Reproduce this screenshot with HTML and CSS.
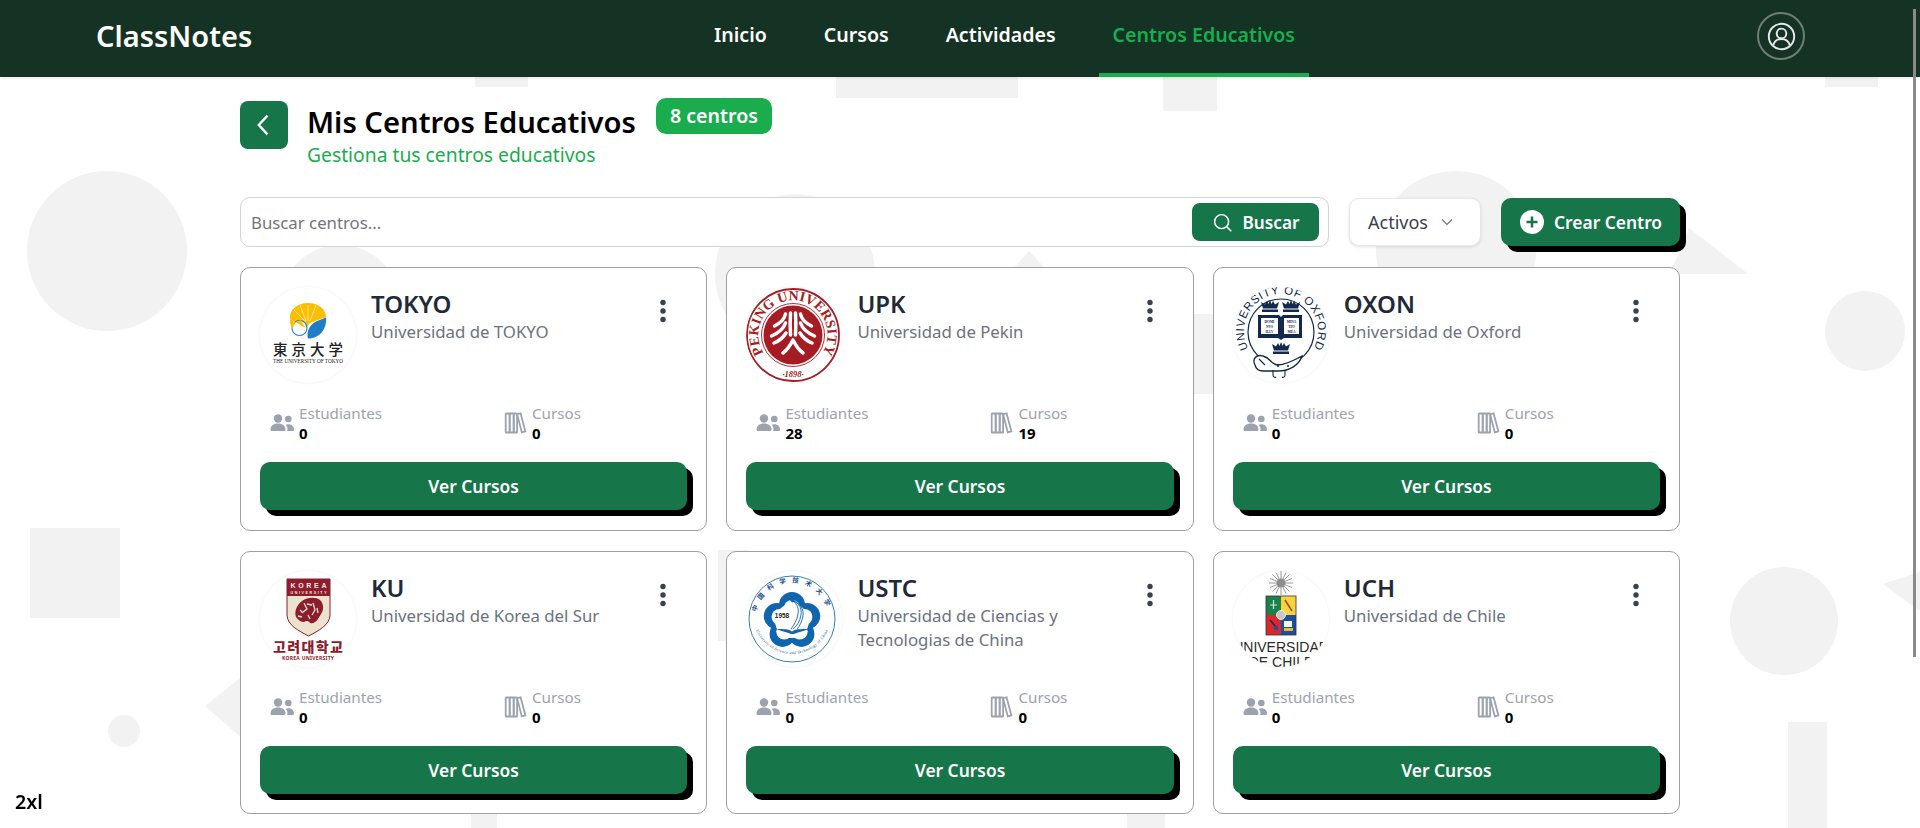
FILE: index.html
```html
<!DOCTYPE html>
<html lang="es">
<head>
<meta charset="utf-8">
<title>ClassNotes</title>
<link rel="stylesheet" href="styles.css">
</head>
<body>
<svg class="bg-shapes" viewBox="0 0 1920 828" aria-hidden="true">
  <rect x="475" y="60" width="53" height="27"/>
  <rect x="836" y="60" width="182" height="38"/>
  <rect x="1163" y="60" width="54" height="51"/>
  <rect x="1825" y="60" width="53" height="27"/>
  <circle cx="107" cy="251" r="80"/>
  <circle cx="795" cy="274" r="80"/>
  <circle cx="1456" cy="251" r="80"/>
  <circle cx="1865" cy="331" r="40"/>
  <circle cx="1784" cy="621" r="54"/>
  <circle cx="124" cy="731" r="16"/>
  <circle cx="340" cy="305" r="60"/>
  <rect x="30" y="528" width="90" height="90"/>
  <rect x="1788" y="722" width="39" height="106"/>
  <rect x="471" y="780" width="26" height="48"/>
  <rect x="718" y="550" width="30" height="91"/>
  <rect x="1180" y="314" width="40" height="80"/>
  <rect x="1127" y="790" width="38" height="38"/>
  <polygon points="1029,251 1075,300 985,300"/>
  <polygon points="1689,228 1748,274 1670,274"/>
  <polygon points="205,706 250,670 250,745"/>
  <polygon points="1883,584 1925,570 1925,615"/>
</svg>

<header class="topbar">
  <div class="brand">ClassNotes</div>
  <nav class="nav">
    <a class="nav-link">Inicio</a>
    <a class="nav-link">Cursos</a>
    <a class="nav-link">Actividades</a>
    <a class="nav-link active">Centros Educativos</a>
  </nav>
  <button class="avatar" aria-label="Perfil">
    <svg viewBox="0 0 24 24" class="avatar-icon"><circle cx="12" cy="12" r="10.5"/><circle cx="12" cy="9.5" r="4"/><path d="M5 19.5c1-3.6 3.8-5.5 7-5.5s6 1.900 7 5.500"/></svg>
  </button>
</header>

<main class="page">
  <section class="page-head">
    <button class="back" aria-label="Volver">
      <svg viewBox="0 0 24 24" class="back-icon"><path d="M15 4 7.500 12 15 20"/></svg>
    </button>
    <div class="head-text">
      <div class="title-row">
        <h1 class="title">Mis Centros Educativos</h1>
        <span class="count">8 centros</span>
      </div>
      <p class="subtitle">Gestiona tus centros educativos</p>
    </div>
  </section>

  <section class="toolbar">
    <div class="search">
      <input class="search-input" placeholder="Buscar centros...">
      <button class="search-btn">
        <svg viewBox="0 0 24 24" class="search-icon"><circle cx="11" cy="11" r="8"/><path d="m17 17 5 5"/></svg>
        Buscar
      </button>
    </div>
    <button class="filter">Activos
      <svg viewBox="0 0 12 8" class="filter-icon"><path d="M1 1.500 6 6.500l5-5"/></svg>
    </button>
    <button class="create">
      <svg viewBox="0 0 24 24" class="create-icon"><circle cx="12" cy="12" r="12" fill="#fff" stroke="none"/><path d="M12 6.500v11M6.500 12h11"/></svg>
      Crear Centro
    </button>
  </section>

  <section class="grid">
    <svg width="0" height="0" class="defs">
      <defs>
        <symbol id="i-users" viewBox="0 0 24 24"><circle cx="8" cy="7.500" r="4.200"/><circle cx="18.300" cy="8" r="3.300"/><path d="M.5 18.500c0-3.800 3-6 7.500-6s7.500 2.200 7.500 6c0 1-.7 1.500-1.500 1.500H2c-.8 0-1.500-.5-1.500-1.500z"/><path d="M16.800 20h5.700c.8 0 1.500-.5 1.500-1.500 0-3.200-2.300-5.300-5.700-5.300-1 0-1.900.2-2.700.5 1.200 1.100 1.900 2.600 1.900 4.300 0 .7 0 1.400-.7 2z"/></symbol>
        <symbol id="i-books" viewBox="0 0 24 24"><g class="books"><rect x="2.700" y="2.500" width="4" height="19" rx=".6"/><rect x="6.700" y="2.500" width="4" height="19" rx=".6"/><rect x="10.700" y="2.500" width="3.400" height="19" rx=".6"/><path d="m14.100 3.200 3.500-.9 4.800 18.100-3.600 1z"/></g></symbol>
        <symbol id="i-dots" viewBox="0 0 24 24"><circle cx="12" cy="3.500" r="2.700"/><circle cx="12" cy="12" r="2.700"/><circle cx="12" cy="20.500" r="2.700"/></symbol>
      </defs>
    </svg>

    <article class="card">
      <div class="card-top">
        <div class="logo">
          <svg viewBox="0 0 96 96">
            <path d="M46 41 30 32c-1-9 7-16 18-16 10 0 18 6 18 14l-16 6z" fill="#fdbe00"/>
            <circle cx="39.500" cy="41" r="7.500" fill="#fff" stroke="#1f7fc5" stroke-width="1.100"/>
            <path d="M30 32c0 5 1 8 2.500 10 1-5 4-8 8-9l5 8z" fill="#fdbe00"/>
            <path d="M48 51.500c-2-7 2-14 8-17l10-4c1 11-6 21-18 21z" fill="#1f7dc4"/>
            <path d="M48 18v16M40 18l6 16M56 18l-6 16M34 23l12 12" stroke="#fff" stroke-width=".6"/>
            <text class="t-tokyo" x="13" y="68" textLength="70">東京大学</text>
            <text class="t-tokyo-sub" x="13" y="76" textLength="70" lengthAdjust="spacingAndGlyphs">THE UNIVERSITY OF TOKYO</text>
          </svg>
        </div>
        <div class="info"><h2 class="name">TOKYO</h2><p class="desc">Universidad de TOKYO</p></div>
        <svg class="kebab"><use href="#i-dots"/></svg>
      </div>
      <div class="stats">
        <div class="stat"><svg class="stat-icon"><use href="#i-users"/></svg><div><div class="stat-label">Estudiantes</div><div class="stat-value">0</div></div></div>
        <div class="stat"><svg class="stat-icon"><use href="#i-books"/></svg><div><div class="stat-label">Cursos</div><div class="stat-value">0</div></div></div>
      </div>
      <button class="view">Ver Cursos</button>
    </article>

    <article class="card">
      <div class="card-top">
        <div class="logo">
          <svg viewBox="0 0 96 96">
            <defs><path id="pk-top" d="M23 72.500A34.500 34.500 0 1 1 71 72.500"/></defs>
            <circle cx="47" cy="48" r="46" fill="#fff" stroke="#a51c24" stroke-width="1.800"/>
            <circle cx="47" cy="48" r="31.500" fill="#fff" stroke="#a51c24" stroke-width=".9"/>
            <circle cx="47" cy="48" r="29.500" fill="#a51c24"/>
            <text class="t-pk"><textPath href="#pk-top" startOffset="50%" text-anchor="middle">PEKING UNIVERSITY</textPath></text>
            <text class="t-pk-year" x="47" y="90" text-anchor="middle">·1898·</text>
            <g fill="none" stroke="#fff" stroke-width="3.500" stroke-linecap="round">
              <path d="M44.500 26c-.5 8-.5 14 0 22M49.500 26c.5 8 .5 14 0 22"/>
              <path d="M39.500 27c-1 5-5 9-11 12M54.500 27c1 5 5 9 11 12"/>
              <path d="M39.500 36c-2 6-7 10-14 13M54.500 36c2 6 7 10 14 13"/>
              <path d="M40 46c-3 5-7 8-12 10M54 46c3 5 7 8 12 10"/>
              <path d="M47 53c-3 6-6 10-10 13M47 53c3 6 6 10 10 13"/>
            </g>
          </svg>
        </div>
        <div class="info"><h2 class="name">UPK</h2><p class="desc">Universidad de Pekin</p></div>
        <svg class="kebab"><use href="#i-dots"/></svg>
      </div>
      <div class="stats">
        <div class="stat"><svg class="stat-icon"><use href="#i-users"/></svg><div><div class="stat-label">Estudiantes</div><div class="stat-value">28</div></div></div>
        <div class="stat"><svg class="stat-icon"><use href="#i-books"/></svg><div><div class="stat-label">Cursos</div><div class="stat-value">19</div></div></div>
      </div>
      <button class="view">Ver Cursos</button>
    </article>

    <article class="card">
      <div class="card-top">
        <div class="logo">
          <svg viewBox="0 0 96 96">
            <defs>
              <path id="ox-arc" d="M16 62.500A37 37 0 1 1 80 62.500"/>
              <g id="crown"><path d="M-8 3.500H8v2.500H-8zM-7 2.500-9-4l4 2.500L-3-5l1.500 3L0-6l1.500 4L3-5l2 3.500L9-4 7 2.500z" fill="#12284c"/></g>
            </defs>
            <circle cx="48" cy="45" r="33" fill="none" stroke="#12284c" stroke-width="1.200"/>
            <text class="t-ox"><textPath href="#ox-arc" startOffset="50%" text-anchor="middle">UNIVERSITY OF OXFORD</textPath></text>
            <use href="#crown" x="37" y="19"/>
            <use href="#crown" x="58" y="19"/>
            <use href="#crown" x="48" y="61"/>
            <path d="M25 28h21l2 2 2-2h19v23H51l-3 2-3-2H25z" fill="#12284c"/>
            <path d="M28 31h17v16H28zM51 31h15v16H51z" fill="#fff"/>
            <text class="t-ox-book" x="36.500" y="36" text-anchor="middle">DOMI</text>
            <text class="t-ox-book" x="36.500" y="41" text-anchor="middle">NVS</text>
            <text class="t-ox-book" x="36.500" y="46" text-anchor="middle">ILLV</text>
            <text class="t-ox-book" x="58.500" y="36" text-anchor="middle">MINA</text>
            <text class="t-ox-book" x="58.500" y="41" text-anchor="middle">TIO</text>
            <text class="t-ox-book" x="58.500" y="46" text-anchor="middle">MEA</text>
            <path d="M22 78c-3-6 1-11 8-9 8 2 8 9 15 9 7 0 15-4 24-9-3 9-12 15-24 15H30c-4 0-7-2-8-6z" fill="#fff" stroke="#12284c" stroke-width="1.300"/>
            <path d="M26 72l6 6M40 83v5c0 2 2 3 3 2M52 83v5c0 2-2 3-3 2" fill="none" stroke="#12284c" stroke-width="1.100"/>
            <circle cx="45" cy="79" r="1" fill="#12284c"/><circle cx="55" cy="79" r="1" fill="#12284c"/>
          </svg>
        </div>
        <div class="info"><h2 class="name">OXON</h2><p class="desc">Universidad de Oxford</p></div>
        <svg class="kebab"><use href="#i-dots"/></svg>
      </div>
      <div class="stats">
        <div class="stat"><svg class="stat-icon"><use href="#i-users"/></svg><div><div class="stat-label">Estudiantes</div><div class="stat-value">0</div></div></div>
        <div class="stat"><svg class="stat-icon"><use href="#i-books"/></svg><div><div class="stat-label">Cursos</div><div class="stat-value">0</div></div></div>
      </div>
      <button class="view">Ver Cursos</button>
    </article>

    <article class="card">
      <div class="card-top">
        <div class="logo">
          <svg viewBox="0 0 96 96">
            <path d="M27 8h43v36c0 10-12 16-21.500 21C39 60 27 54 27 44z" fill="#ece3ce" stroke="#8c1c2e" stroke-width="1"/>
            <rect x="27" y="8" width="43" height="17" fill="#8c1c2e"/>
            <text class="t-ku-a" x="48.500" y="17" text-anchor="middle" textLength="36">KOREA</text>
            <text class="t-ku-b" x="48.500" y="23" text-anchor="middle" textLength="36">UNIVERSITY</text>
            <path d="M36 46c-2-6 1-12 6-16 6-4 14-4 18-1 4 4 4 10 1 14l-3 5c-2 3-5 5-8 4-2-3-4-2-6-1-3 0-6-2-8-5z" fill="#8c1c2e"/>
            <path d="M44 32l3 6-4 3M53 32l2 7-3 5M40 39l3 3M48 44l2 4M57 37l1 5M38 45l4 1M47 33l5 1" stroke="#ece3ce" stroke-width="1.300" fill="none"/>
            <text class="t-ku-k" x="48" y="81" text-anchor="middle" textLength="70">고려대학교</text>
            <text class="t-ku-s" x="48" y="89" text-anchor="middle" textLength="52">KOREA UNIVERSITY</text>
          </svg>
        </div>
        <div class="info"><h2 class="name">KU</h2><p class="desc">Universidad de Korea del Sur</p></div>
        <svg class="kebab"><use href="#i-dots"/></svg>
      </div>
      <div class="stats">
        <div class="stat"><svg class="stat-icon"><use href="#i-users"/></svg><div><div class="stat-label">Estudiantes</div><div class="stat-value">0</div></div></div>
        <div class="stat"><svg class="stat-icon"><use href="#i-books"/></svg><div><div class="stat-label">Cursos</div><div class="stat-value">0</div></div></div>
      </div>
      <button class="view">Ver Cursos</button>
    </article>

    <article class="card">
      <div class="card-top">
        <div class="logo">
          <svg viewBox="0 0 96 96">
            <defs>
              <path id="us-top" d="M11 56A36 36 0 1 1 81 56"/>
              <path id="us-bot" d="M7 44A39 39 0 0 0 85 44"/>
            </defs>
            <circle cx="46" cy="48" r="43" fill="none" stroke="#1d6fb4" stroke-width=".9"/>
            <text class="t-us-cn"><textPath href="#us-top" startOffset="50%" text-anchor="middle">中国科学技术大学</textPath></text>
            <text class="t-us-en"><textPath href="#us-bot" startOffset="50%" text-anchor="middle">University of Science and Technology of China</textPath></text>
            <g fill="#0f65ae">
              <circle cx="46" cy="34" r="13"/><circle cx="61.200" cy="45.100" r="13"/><circle cx="55.400" cy="62.900" r="13"/><circle cx="36.600" cy="62.900" r="13"/><circle cx="30.800" cy="45.100" r="13"/>
            </g>
            <g fill="#fff">
              <circle cx="46" cy="50" r="17"/><circle cx="46" cy="37" r="8"/><circle cx="58.400" cy="46" r="8"/><circle cx="53.700" cy="60.500" r="8"/><circle cx="38.300" cy="60.500" r="8"/><circle cx="33.600" cy="46" r="8"/>
            </g>
            <path d="M47 30c6 2 9 7 8 14-1 6-4 11-8 14M47 30c7 2 11 8 10 15-1 5-3 10-6 13M47 30c4 3 6 7 5 13-1 6-4 11-7 15" fill="none" stroke="#0f65ae" stroke-width=".9"/>
            <path d="M42 27l8 3-4 1.500z" fill="#0f65ae"/>
            <path d="M30 58c8 0 13 0 16 2.500C49 58 54 58 63 58c-6 2.500-11 3-15 5h-3c-4-2-9-2.500-15-5z" fill="#0f65ae"/>
            <text class="t-us-year" x="36" y="47" text-anchor="middle">1958</text>
          </svg>
        </div>
        <div class="info"><h2 class="name">USTC</h2><p class="desc">Universidad de Ciencias y Tecnologias de China</p></div>
        <svg class="kebab"><use href="#i-dots"/></svg>
      </div>
      <div class="stats">
        <div class="stat"><svg class="stat-icon"><use href="#i-users"/></svg><div><div class="stat-label">Estudiantes</div><div class="stat-value">0</div></div></div>
        <div class="stat"><svg class="stat-icon"><use href="#i-books"/></svg><div><div class="stat-label">Cursos</div><div class="stat-value">0</div></div></div>
      </div>
      <button class="view">Ver Cursos</button>
    </article>

    <article class="card">
      <div class="card-top">
        <div class="logo">
          <svg viewBox="0 0 96 96">
            <g stroke="#8d8d8d" stroke-width=".9">
              <path d="M48 0v24M36 12h24M39.500 3.500l17 17M56.500 3.500l-17 17M43 1.500l10 21M53 1.500l-10 21M37 7.500l22 9M59 7.500l-22 9"/>
            </g>
            <circle cx="48" cy="12" r="4.500" fill="#8d8d8d"/>
            <rect x="33" y="25" width="15" height="19" fill="#17824a"/>
            <rect x="48" y="25" width="15" height="19" fill="#fcd33d"/>
            <rect x="33" y="44" width="15" height="20" fill="#d8282e"/>
            <rect x="48" y="44" width="15" height="20" fill="#1d4f9c"/>
            <rect x="33" y="25" width="30" height="39" fill="none" stroke="#333" stroke-width=".8"/>
            <path d="M37 34h7M40.500 29v9" stroke="#d5e6d9" stroke-width="1.200"/>
            <path d="M52 29l7 11" stroke="#8a5a24" stroke-width="1.600"/>
            <path d="M37 49l6 7" stroke="#1d2a55" stroke-width="1.500"/>
            <circle cx="43" cy="57" r="2.200" fill="#1d4f9c"/>
            <rect x="51" y="50" width="8" height="6" fill="#f5f2e6"/><rect x="51" y="57" width="9" height="3" fill="#e9b92f"/>
            <circle cx="48" cy="44" r="4.500" fill="#c7c7c7" stroke="#fff" stroke-width=".8"/>
            <text class="t-uch" x="48" y="81" text-anchor="middle">UNIVERSIDAD</text>
            <text class="t-uch" x="48" y="96" text-anchor="middle">DE CHILE</text>
          </svg>
        </div>
        <div class="info"><h2 class="name">UCH</h2><p class="desc">Universidad de Chile</p></div>
        <svg class="kebab"><use href="#i-dots"/></svg>
      </div>
      <div class="stats">
        <div class="stat"><svg class="stat-icon"><use href="#i-users"/></svg><div><div class="stat-label">Estudiantes</div><div class="stat-value">0</div></div></div>
        <div class="stat"><svg class="stat-icon"><use href="#i-books"/></svg><div><div class="stat-label">Cursos</div><div class="stat-value">0</div></div></div>
      </div>
      <button class="view">Ver Cursos</button>
    </article>
  </section>
</main>

<div class="breakpoint">2xl</div>
<div class="scroll-thumb"></div>
</body>
</html>
```

FILE: styles.css
```css
* { box-sizing: border-box; }
html, body { height: 100%; }
body {
  margin: 0;
  height: 828px;
  overflow: hidden;
  background: #fff;
  font-family: "Noto Sans", "Noto Sans CJK JP", sans-serif;
  color: #000;
  position: relative;
}
button { font-family: inherit; cursor: pointer; border: 0; }
h1, h2, p { margin: 0; }

.bg-shapes { position: absolute; inset: 0; width: 1920px; height: 828px; fill: #f2f2f2; }

.topbar {
  position: relative;
  height: 77px;
  background: #153324;
  display: flex;
  align-items: center;
  padding: 0 115px 5px 96px;
  box-shadow: 0 1px 3px rgba(0, 0, 0, .1);
}
.brand { font-size: 29px; font-weight: 600; color: #fff; line-height: 36px; width: 604px; flex: none; }
.nav { display: flex; gap: 29px; height: 77px; margin-bottom: -5px; flex: 1; }
.nav-link {
  padding: 0 14px 5px;
  display: flex;
  align-items: center;
  font-size: 19.600px;
  font-weight: 600;
  color: #fff;
  border-bottom: 4px solid transparent;
}
.nav-link.active { color: #1aad4e; border-bottom-color: #1aad4e; }
.avatar {
  width: 48px;
  height: 48px;
  border-radius: 50%;
  border: 2px solid #6f7d76;
  background: transparent;
  padding: 0;
  display: flex;
  align-items: center;
  justify-content: center;
}
.avatar-icon { width: 29px; height: 29px; fill: none; stroke: #e5e7eb; stroke-width: 1.600; }

.page { position: relative; padding: 21px 240px 0; }
.page-head { display: flex; align-items: flex-start; gap: 19px; }
.back {
  width: 48px;
  height: 48px;
  margin-top: 3px;
  border-radius: 8px;
  background: #16764a;
  padding: 0;
  display: flex;
  align-items: center;
  justify-content: center;
}
.back-icon { width: 28px; height: 28px; fill: none; stroke: #fff; stroke-width: 2; }
.title-row { display: flex; gap: 20px; align-items: flex-start; height: 48px; }
.title { font-size: 29.200px; font-weight: 600; line-height: 48px; color: #000; }
.count {
  height: 36px;
  padding: 0 14px;
  border-radius: 10px;
  background: #1aad4e;
  color: #fff;
  font-size: 19.600px;
  font-weight: 600;
  line-height: 36px;
}
.subtitle { font-size: 19.300px; line-height: 18px; color: #1aad4e; }

.toolbar { display: flex; align-items: center; gap: 20px; margin-top: 33px; height: 50px; }
.search {
  flex: 1;
  height: 50px;
  display: flex;
  align-items: center;
  background: #fff;
  border: 1px solid #d1d5db;
  border-radius: 10px;
  padding: 0 9px 0 10px;
}
.search-input {
  flex: 1;
  border: 0;
  outline: 0;
  background: transparent;
  font: 400 16.800px "Noto Sans", sans-serif;
  padding: 0;
}
.search-input::placeholder { color: #757575; opacity: 1; }
.search-btn {
  width: 127px;
  height: 38px;
  border-radius: 8px;
  background: #16764a;
  color: #fff;
  font-size: 17.200px;
  font-weight: 600;
  display: flex;
  align-items: center;
  justify-content: center;
  gap: 10px;
}
.search-icon { width: 21px; height: 21px; fill: none; stroke: #fff; stroke-width: 1.700; }
.filter {
  width: 132px;
  height: 48px;
  border: 1px solid #e5e7eb;
  border-radius: 10px;
  background: #fff;
  box-shadow: 0 1px 3px rgba(0, 0, 0, .12);
  color: #374151;
  font-size: 18px;
  display: flex;
  align-items: center;
  gap: 13px;
  padding: 0 0 0 18px;
}
.filter-icon { width: 12px; height: 8px; fill: none; stroke: #6b7280; stroke-width: 1.200; }
.create {
  width: 179px;
  height: 48px;
  border-radius: 10px;
  background: #16764a;
  box-shadow: 6px 6px 0 #000;
  color: #fff;
  font-size: 17.400px;
  font-weight: 600;
  display: flex;
  align-items: center;
  gap: 10px;
  padding: 0 0 0 19px;
}
.create-icon { width: 24px; height: 24px; fill: none; stroke: #16764a; stroke-width: 2.500; }

.grid { display: grid; grid-template-columns: repeat(3, 1fr); gap: 20px 19.200px; margin-top: 20px; }
.defs { position: absolute; }
.card {
  background: #fff;
  border: 1px solid #a0a0a0;
  border-radius: 10px;
  padding: 19px 19px 19px;
  height: 263.500px;
}
.card-top { display: flex; align-items: flex-start; gap: 15px; height: 96px; }
.logo {
  width: 96px;
  height: 96px;
  flex: none;
  border-radius: 50%;
  overflow: hidden;
  background: #fff;
  box-shadow: 0 0 3px rgba(0, 0, 0, .07);
}
.logo svg { display: block; width: 96px; height: 96px; }
.info { flex: 1; padding-top: 1px; }
.name { font-size: 24px; line-height: 32px; font-weight: 600; color: #1f2937; }
.desc { font-size: 16.800px; line-height: 24px; color: #6b7280; }
.kebab { width: 24px; height: 24px; fill: #374151; flex: none; margin: 12px 12px 0 0; }

.stats { display: grid; grid-template-columns: 233px 1fr; padding-left: 10px; margin-top: 20px; }
.stat { display: flex; align-items: center; gap: 5px; }
.stat-icon { width: 24px; height: 24px; fill: #9ca3af; flex: none; }
.books { fill: none; stroke: #9ca3af; stroke-width: 1.800; }
.stat-label { font-size: 15.200px; line-height: 20px; color: #9ca3af; }
.stat-value { font-size: 15px; line-height: 20px; font-weight: 700; color: #000; }
.view {
  display: block;
  width: 100%;
  height: 48px;
  margin-top: 19px;
  border-radius: 10px;
  background: #16764a;
  box-shadow: 6px 6px 0 #000;
  color: #fff;
  font-size: 17.400px;
  font-weight: 600;
}

.t-tokyo { font: 500 14.500px "Noto Sans CJK JP", sans-serif; fill: #222; }
.t-tokyo-sub { font: 400 5.500px "Liberation Serif", serif; fill: #222; }
.t-pk { font: 700 14px "Liberation Serif", serif; fill: #a51c24; }
.t-pk-year { font: italic 700 8.500px "Liberation Serif", serif; fill: #a51c24; }
.t-ox { font: 400 11.500px "Liberation Sans", sans-serif; letter-spacing: .6px; fill: #12284c; }
.t-ox-book { font: 700 3.500px "Liberation Serif", serif; fill: #12284c; }
.t-ku-a { font: 700 7px "Liberation Sans", sans-serif; fill: #f4ecd8; }
.t-ku-b { font: 700 3.500px "Liberation Sans", sans-serif; fill: #f4ecd8; }
.t-ku-k { font: 900 14px "Noto Sans CJK KR", sans-serif; fill: #8c1c2e; }
.t-ku-s { font: 700 5px "Noto Sans", sans-serif; fill: #8c1c2e; }
.t-us-cn { font: 700 6.500px "Noto Sans CJK SC", sans-serif; letter-spacing: 6px; fill: #1d4f86; }
.t-us-en { font: 400 4.200px "Liberation Serif", serif; letter-spacing: .25px; fill: #1d5f9b; }
.t-us-year { font: 700 6.500px "Liberation Sans", sans-serif; fill: #222; }
.t-uch { font: 400 14px "Liberation Sans", sans-serif; fill: #2a2a2a; }

.breakpoint {
  position: fixed;
  left: 15px;
  bottom: 15px;
  font-size: 19.600px;
  line-height: 22px;
  font-weight: 600;
  color: #000;
}
.scroll-thumb {
  position: fixed;
  left: 1913px;
  top: 9px;
  width: 3px;
  height: 648px;
  background: #8a8a8a;
}
```
